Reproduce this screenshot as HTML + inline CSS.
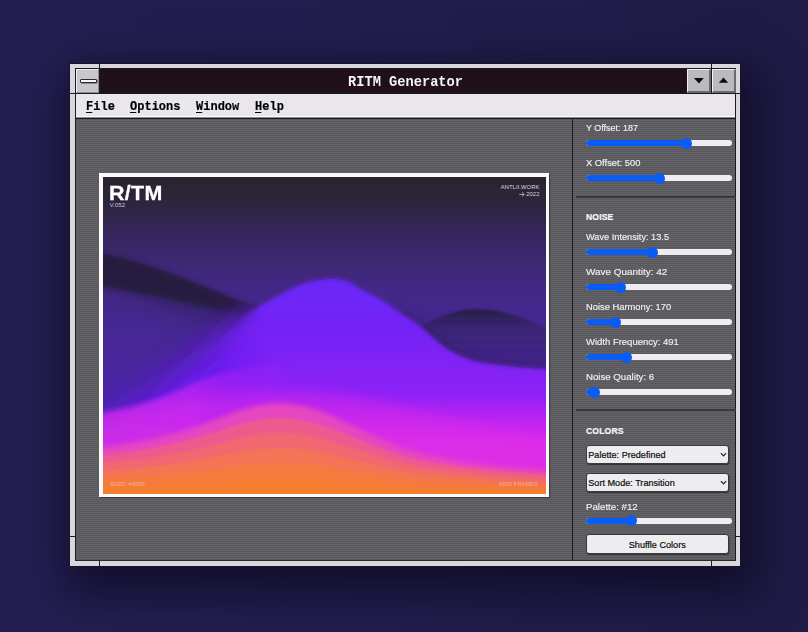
<!DOCTYPE html>
<html><head><meta charset="utf-8">
<style>
*{margin:0;padding:0;box-sizing:border-box}
html,body{width:808px;height:632px;overflow:hidden;background:#231e4e;font-family:"Liberation Sans",sans-serif}
.a{position:absolute}
#bg{left:0;top:0;width:808px;height:632px;background:linear-gradient(90deg,#241f52 0%,#221d4d 45%,#1f1b45 100%)}
.frame{background:#d9d7dc}
.dk{background:#1b1a20}
#content{left:76px;top:119px;width:659px;height:442px;background:#5e5d62;
 background-image:repeating-linear-gradient(180deg,rgba(0,0,0,0.05) 0 1px,rgba(255,255,255,0.03) 1px 2px)}
.lbl{color:#f2f0f4;font-size:9.8px;-webkit-text-stroke:0.15px #f2f0f4;white-space:nowrap;transform-origin:0 0;line-height:1}
.hdr{color:#f8f7fa;font-size:8.6px;font-weight:bold;-webkit-text-stroke:0.2px #f8f7fa;letter-spacing:0.15px;white-space:nowrap;line-height:1}
.track{height:6px;border-radius:3px;background:#efedf1;left:586px;width:146px}
.fill{height:6px;border-radius:3px;background:#0a5cf5;left:586px}
.thumb{width:11px;height:11px;border-radius:50%;background:#0a5cf5}
.sel{left:585.5px;width:143.5px;height:19.5px;background:#edecef;border:1px solid #3a393e;border-radius:3px;color:#0c0c0c;font-size:9.1px;line-height:19px;padding-left:1.8px;white-space:nowrap;-webkit-text-stroke:0.2px #0c0c0c;box-shadow:0.5px 1px 0.5px rgba(0,0,0,0.45)}
.chev{position:absolute;right:1.5px;top:6.5px;width:7px;height:5px}
.menu{font-family:"Liberation Mono",monospace;font-weight:bold;font-size:13.5px;color:#000;line-height:14px;white-space:nowrap;transform:scaleX(0.89);transform-origin:0 0;-webkit-text-stroke:0.2px #000}
.menu u{text-decoration:none;position:relative}
.menu u:after{content:"";position:absolute;left:0;width:7px;top:12.5px;height:1.6px;background:#000}
</style></head><body>
<div id="bg" class="a"></div>
<!-- window frame -->
<div class="a" style="left:69px;top:63px;width:672px;height:504px;background:#16142a;box-shadow:6px 16px 40px 10px rgba(6,4,18,0.55)"></div>
<div class="a frame" style="left:70px;top:64px;width:670px;height:502px"></div>
<!-- notches -->
<div class="a dk" style="left:99px;top:64px;width:1px;height:4px"></div>
<div class="a dk" style="left:711px;top:64px;width:1px;height:4px"></div>
<div class="a dk" style="left:70px;top:93px;width:5px;height:1px"></div>
<div class="a dk" style="left:736px;top:93px;width:4px;height:1px"></div>
<div class="a dk" style="left:99px;top:561px;width:1px;height:5px"></div>
<div class="a dk" style="left:711px;top:561px;width:1px;height:5px"></div>
<div class="a dk" style="left:70px;top:536px;width:5px;height:1px"></div>
<div class="a dk" style="left:736px;top:536px;width:4px;height:1px"></div>
<!-- inner dark border -->
<div class="a dk" style="left:75px;top:68px;width:661px;height:493px"></div>
<!-- close box -->
<div class="a" style="left:76px;top:69px;width:23px;height:24px;background:#c9c7cd;border-top:1px solid #eeedf0;border-left:1px solid #eeedf0;border-right:1px solid #8d8b92;border-bottom:1px solid #8d8b92"></div>
<div class="a" style="left:80px;top:79px;width:17px;height:4px;background:#f7f6f8;border:1px solid #2a2a2e;border-radius:1px;box-shadow:0.5px 0.5px 0 #555"></div>
<!-- title bar -->
<div class="a" style="left:100px;top:69px;width:587px;height:24px;background:#1f1117"></div>
<div class="a" style="left:340px;top:73px;width:131px;text-align:center;font-family:'Liberation Mono',monospace;font-weight:bold;font-size:13.7px;color:#f5f5f5;line-height:17px;transform:scaleY(1.11);transform-origin:50% 3px">RITM Generator</div>
<!-- buttons -->
<div class="a" style="left:687px;top:69px;width:24px;height:24px;background:#bdbabf;border-top:1.5px solid #f2f0f4;border-left:1.5px solid #f2f0f4;border-right:2px solid #6c6a70;border-bottom:2px solid #6c6a70"></div>
<div class="a" style="left:712px;top:69px;width:23.5px;height:24px;background:#bdbabf;border-top:1.5px solid #f2f0f4;border-left:1.5px solid #f2f0f4;border-right:2px solid #6c6a70;border-bottom:2px solid #6c6a70"></div>
<svg class="a" style="left:687px;top:69px" width="49" height="24"><g transform="translate(-687,-69)"><path d="M694 78 L703.8 78 L698.9 83.5 Z" fill="#0c0c0c"/><path d="M718.8 82.8 L728.2 82.8 L723.5 77.6 Z" fill="#0c0c0c"/></g></svg>
<!-- menu bar -->
<div class="a" style="left:76px;top:94px;width:659px;height:22px;background:#e9e7ec"></div>
<div class="a" style="left:76px;top:116px;width:659px;height:1px;background:#fbfafc"></div>
<div class="a" style="left:76px;top:117px;width:659px;height:1px;background:#8a898e"></div>
<div class="a menu" style="left:86px;top:100px"><u>F</u>ile</div>
<div class="a menu" style="left:129.5px;top:100px"><u>O</u>ptions</div>
<div class="a menu" style="left:195.5px;top:100px"><u>W</u>indow</div>
<div class="a menu" style="left:255px;top:100px"><u>H</u>elp</div>
<!-- content -->
<div id="content" class="a"></div>
<div class="a dk" style="left:572px;top:119px;width:1px;height:442px"></div>
<div class="a" style="left:76px;top:559.5px;width:659px;height:1.5px;background:#2a292e"></div>
<div class="a dk" style="left:576px;top:196px;width:160px;height:2px;background:#3a393e"></div>
<div class="a dk" style="left:576px;top:409px;width:160px;height:2px;background:#3a393e"></div>

<!-- panel controls -->
<div class="a lbl" style="left:585.5px;top:123px;transform:scaleX(0.915)">Y Offset: 187</div>
<div class="a track" style="top:140px"></div><div class="a fill" style="top:140px;width:100px"></div><div class="a thumb" style="left:681px;top:137.5px"></div>
<div class="a lbl" style="left:585.5px;top:158px;transform:scaleX(0.955)">X Offset: 500</div>
<div class="a track" style="top:175px"></div><div class="a fill" style="top:175px;width:74px"></div><div class="a thumb" style="left:654px;top:172.5px"></div>

<div class="a hdr" style="left:586px;top:213px">NOISE</div>
<div class="a lbl" style="left:585.5px;top:232px;transform:scaleX(0.939)">Wave Intensity: 13.5</div>
<div class="a track" style="top:249px"></div><div class="a fill" style="top:249px;width:67px"></div><div class="a thumb" style="left:647px;top:246.5px"></div>
<div class="a lbl" style="left:585.5px;top:267px;transform:scaleX(1.013)">Wave Quantity: 42</div>
<div class="a track" style="top:284px"></div><div class="a fill" style="top:284px;width:34px"></div><div class="a thumb" style="left:614.5px;top:281.5px"></div>
<div class="a lbl" style="left:585.5px;top:302px;transform:scaleX(0.954)">Noise Harmony: 170</div>
<div class="a track" style="top:319px"></div><div class="a fill" style="top:319px;width:30px"></div><div class="a thumb" style="left:610px;top:316.5px"></div>
<div class="a lbl" style="left:585.5px;top:337px;transform:scaleX(0.968)">Width Frequency: 491</div>
<div class="a track" style="top:354px"></div><div class="a fill" style="top:354px;width:40px"></div><div class="a thumb" style="left:620.5px;top:351.5px"></div>
<div class="a lbl" style="left:585.5px;top:372px;transform:scaleX(0.985)">Noise Quality: 6</div>
<div class="a track" style="top:389px"></div><div class="a fill" style="top:389px;width:10px"></div><div class="a thumb" style="left:588.5px;top:386.5px"></div>

<div class="a hdr" style="left:586px;top:427px">COLORS</div>
<div class="a sel" style="top:444.5px">Palette: Predefined<svg class="chev" viewBox="0 0 7 5"><path d="M0.9 1.2 L3.5 3.9 L6.1 1.2" fill="none" stroke="#222" stroke-width="1.2"/></svg></div>
<div class="a sel" style="top:472.5px;height:19.5px">Sort Mode: Transition<svg class="chev" viewBox="0 0 7 5"><path d="M0.9 1.2 L3.5 3.9 L6.1 1.2" fill="none" stroke="#222" stroke-width="1.2"/></svg></div>
<div class="a lbl" style="left:585.5px;top:501.5px;transform:scaleX(0.99)">Palette: #12</div>
<div class="a track" style="top:518px"></div><div class="a fill" style="top:518px;width:45px"></div><div class="a thumb" style="left:625.5px;top:515px"></div>
<div class="a sel" style="top:533.5px;height:20.5px;text-align:center;padding:0;line-height:20.5px;font-size:9.1px">Shuffle Colors</div>

<!-- poster -->
<div class="a" style="left:99px;top:173px;width:450px;height:324px;background:#fafafa;box-shadow:1px 1px 1px rgba(0,0,0,0.35)"></div>
<svg class="a" style="left:102.5px;top:176.5px" width="443.5" height="317" viewBox="102.5 176.5 443.5 317">
<defs>
<linearGradient id="gbg" x1="0" y1="176" x2="0" y2="420" gradientUnits="userSpaceOnUse">
<stop offset="0" stop-color="#29242f"/><stop offset="0.08" stop-color="#2c2538"/><stop offset="0.16" stop-color="#30264a"/><stop offset="0.225" stop-color="#35265c"/><stop offset="0.336" stop-color="#3c2870"/><stop offset="0.45" stop-color="#432886"/><stop offset="1" stop-color="#4c26ac"/></linearGradient>
<linearGradient id="gridge" x1="179" y1="280" x2="163" y2="328" gradientUnits="userSpaceOnUse">
<stop offset="0" stop-color="#201a30" stop-opacity="1"/><stop offset="0.3" stop-color="#261d42" stop-opacity="0.9"/><stop offset="1" stop-color="#3a2a80" stop-opacity="0"/></linearGradient>
<linearGradient id="ghump" x1="0" y1="309" x2="0" y2="370" gradientUnits="userSpaceOnUse">
<stop offset="0" stop-color="#241a3c" stop-opacity="1"/><stop offset="0.1" stop-color="#2a1e4c" stop-opacity="0.85"/><stop offset="0.3" stop-color="#30205c" stop-opacity="0.5"/><stop offset="1" stop-color="#36226a" stop-opacity="0.25"/></linearGradient>
<linearGradient id="ghill" x1="0" y1="278" x2="0" y2="440" gradientUnits="userSpaceOnUse">
<stop offset="0" stop-color="#6a26f8"/><stop offset="0.3" stop-color="#7424f7"/><stop offset="0.7" stop-color="#8c20f6"/><stop offset="0.85" stop-color="#b624f2"/><stop offset="1" stop-color="#d82aee"/></linearGradient>
<linearGradient id="gpink" x1="0" y1="403" x2="0" y2="494" gradientUnits="userSpaceOnUse">
<stop offset="0" stop-color="#ec48b8"/><stop offset="0.3" stop-color="#f05a88"/><stop offset="0.65" stop-color="#f26a58"/><stop offset="1" stop-color="#f77c22"/></linearGradient>
<linearGradient id="gmag" x1="0" y1="380" x2="0" y2="494" gradientUnits="userSpaceOnUse">
<stop offset="0" stop-color="#c824f0"/><stop offset="0.4" stop-color="#dc2ce8"/><stop offset="1" stop-color="#e83ad8"/></linearGradient>
<linearGradient id="gmR" x1="215" y1="0" x2="270" y2="0" gradientUnits="userSpaceOnUse"><stop offset="0" stop-color="#000"/><stop offset="1" stop-color="#fff"/></linearGradient>
<mask id="mR" maskUnits="userSpaceOnUse" x="90" y="160" width="470" height="350"><rect x="90" y="160" width="470" height="350" fill="url(#gmR)"/></mask>
<clipPath id="cR"><path d="M90 251 C150 268 210 292 256 308 C260.0 305.8 271.8 298.7 280.0 294.5 C288.2 290.3 296.7 285.7 305.0 283.0 C313.3 280.3 323.3 278.9 330.0 278.5 C336.7 278.1 340.0 278.8 345.0 280.5 C350.0 282.2 354.2 285.8 360.0 289.0 C365.8 292.2 373.5 295.6 380.0 299.5 C386.5 303.4 392.5 308.1 399.0 312.5 C405.5 316.9 413.0 321.4 419.0 326.0 C425.0 330.6 429.8 335.8 435.0 340.0 C440.2 344.2 443.5 347.5 450.0 351.0 C456.5 354.5 463.8 358.4 474.0 361.0 C484.2 363.6 498.3 365.1 511.0 366.5 C523.7 367.9 543.5 369.0 550.0 369.5 L560 369.5 L560 510 L90 510 Z"/></clipPath>
<filter id="b18" x="-50%" y="-50%" width="200%" height="200%"><feGaussianBlur stdDeviation="16"/></filter>
<filter id="b3" x="-20%" y="-50%" width="140%" height="200%"><feGaussianBlur stdDeviation="2.6"/></filter>
<linearGradient id="gmag2" x1="0" y1="375" x2="0" y2="445" gradientUnits="userSpaceOnUse"><stop offset="0" stop-color="#b824f2"/><stop offset="0.5" stop-color="#d02af0"/><stop offset="1" stop-color="#dc30e8"/></linearGradient>
<linearGradient id="gmL" x1="190" y1="0" x2="290" y2="0" gradientUnits="userSpaceOnUse"><stop offset="0" stop-color="#fff"/><stop offset="1" stop-color="#000"/></linearGradient>
<mask id="mL" maskUnits="userSpaceOnUse" x="90" y="160" width="470" height="350"><rect x="90" y="160" width="470" height="350" fill="url(#gmL)"/></mask>
<linearGradient id="gorg" x1="0" y1="465" x2="0" y2="494" gradientUnits="userSpaceOnUse"><stop offset="0" stop-color="#f47a3a" stop-opacity="0"/><stop offset="0.6" stop-color="#f47a34" stop-opacity="0.25"/><stop offset="1" stop-color="#f67c26" stop-opacity="0.65"/></linearGradient>
<filter id="b2" x="-20%" y="-20%" width="140%" height="140%"><feGaussianBlur stdDeviation="1.2"/></filter>
<filter id="b14" x="-50%" y="-50%" width="200%" height="200%"><feGaussianBlur stdDeviation="14"/></filter>
<filter id="b8" x="-50%" y="-50%" width="200%" height="200%"><feGaussianBlur stdDeviation="6"/></filter>
</defs>
<rect x="100" y="170" width="450" height="330" fill="url(#gbg)"/>
<path d="M95 251 C150 268 210 292 256 309 L256 420 L95 420 Z" fill="url(#gridge)" filter="url(#b2)" opacity="0.55"/>
<path d="M95 252 C140 258 200 283 256 308 L250 314 C200 306 140 292 95 285 Z" fill="#281d40" filter="url(#b3)"/>
<path d="M405 335 C430 320 450 309 476 309 C505 309 530 320 550 330 L550 400 L405 400 Z" fill="url(#ghump)" filter="url(#b2)"/>
<path d="M399 312.5 C402.3 314.8 413.0 321.4 419.0 326.0 C425.0 330.6 429.8 335.8 435.0 340.0 C440.2 344.2 443.5 347.5 450.0 351.0 C456.5 354.5 463.8 358.4 474.0 361.0 C484.2 363.6 498.3 365.1 511.0 366.5 C523.7 367.9 543.5 369.0 550.0 369.5" fill="none" stroke="#2a1c50" stroke-width="10" opacity="0.4" filter="url(#b8)"/>
<path d="M40 510 C120 460 200 365 256 308 C260.0 305.8 271.8 298.7 280.0 294.5 C288.2 290.3 296.7 285.7 305.0 283.0 C313.3 280.3 323.3 278.9 330.0 278.5 C336.7 278.1 340.0 278.8 345.0 280.5 C350.0 282.2 354.2 285.8 360.0 289.0 C365.8 292.2 373.5 295.6 380.0 299.5 C386.5 303.4 392.5 308.1 399.0 312.5 C405.5 316.9 413.0 321.4 419.0 326.0 C425.0 330.6 429.8 335.8 435.0 340.0 C440.2 344.2 443.5 347.5 450.0 351.0 C456.5 354.5 463.8 358.4 474.0 361.0 C484.2 363.6 498.3 365.1 511.0 366.5 C523.7 367.9 543.5 369.0 550.0 369.5 L550 500 L40 500 Z" fill="url(#ghill)" filter="url(#b18)" clip-path="url(#cR)"/>
<path d="M50 450 L240 335 L290 325 L290 440 L50 530 Z" fill="#6018f0" opacity="0.75" filter="url(#b18)" clip-path="url(#cR)"/>
<path d="M90 430 C150 400 215 340 256 308 C260.0 305.8 271.8 298.7 280.0 294.5 C288.2 290.3 296.7 285.7 305.0 283.0 C313.3 280.3 323.3 278.9 330.0 278.5 C336.7 278.1 340.0 278.8 345.0 280.5 C350.0 282.2 354.2 285.8 360.0 289.0 C365.8 292.2 373.5 295.6 380.0 299.5 C386.5 303.4 392.5 308.1 399.0 312.5 C405.5 316.9 413.0 321.4 419.0 326.0 C425.0 330.6 429.8 335.8 435.0 340.0 C440.2 344.2 443.5 347.5 450.0 351.0 C456.5 354.5 463.8 358.4 474.0 361.0 C484.2 363.6 498.3 365.1 511.0 366.5 C523.7 367.9 543.5 369.0 550.0 369.5 L550 500 L90 500 Z" fill="url(#ghill)" filter="url(#b3)" mask="url(#mR)"/>

<path d="M90 418 C130 412 160 404 200 396 C240 390 280 388 330 392 C400 405 480 425 550 440 L550 500 L90 500 Z" fill="url(#gmag)" filter="url(#b8)" opacity="0.5"/>
<path d="M95.0 414.0 C102.5 412.3 126.7 407.8 140.0 404.0 C153.3 400.2 165.0 395.0 175.0 391.0 C185.0 387.0 189.2 383.8 200.0 380.0 C210.8 376.2 223.3 370.7 240.0 368.0 C256.7 365.3 273.3 362.7 300.0 364.0 C326.7 365.3 358.3 370.7 400.0 376.0 C441.7 381.3 525.0 392.7 550.0 396.0 L550 500 L95 500 Z" fill="url(#gmag2)" filter="url(#b3)" opacity="0.75" mask="url(#mL)"/>
<path d="M95 448.0 C130 444.0 160 437.0 185 430.0 C220 419.0 245 404.0 275 403.0 C305 402.0 330 414.0 358 428.0 C385 441.0 400 448.0 425 454.0 C470 463.0 510 468.0 550 471.0 L550 500 L95 500 Z" fill="#e646c0" filter="url(#b3)"/>
<path d="M95 455.7 C130 452.3 160 446.4 185 440.6 C220 431.3 245 418.7 275 417.9 C305 417.0 330 427.1 358 438.9 C385 449.8 400 455.7 425 460.7 C470 468.3 510 472.5 550 475.0 L550 500 L95 500 Z" fill="#ef5a8e" filter="url(#b2)"/>
<path d="M95 463.4 C130 460.6 160 455.9 185 451.1 C220 443.6 245 433.4 275 432.8 C305 432.1 330 440.2 358 449.8 C385 458.6 400 463.4 425 467.4 C470 473.6 510 477.0 550 479.0 L550 500 L95 500 Z" fill="#f16870" filter="url(#b2)"/>
<path d="M95 471.0 C130 469.0 160 465.3 185 461.7 C220 456.0 245 448.2 275 447.6 C305 447.1 330 453.4 358 460.6 C385 467.4 400 471.0 425 474.2 C470 478.8 510 481.4 550 483.0 L550 500 L95 500 Z" fill="#f37456" filter="url(#b2)"/>
<path d="M95 478.7 C130 477.3 160 474.8 185 472.2 C220 468.3 245 462.9 275 462.5 C305 462.2 330 466.5 358 471.5 C385 476.2 400 478.7 425 480.9 C470 484.1 510 485.9 550 487.0 L550 500 L95 500 Z" fill="#f47a40" filter="url(#b2)"/>
<path d="M95 486.4 C130 485.6 160 484.2 185 482.8 C220 480.6 245 477.6 275 477.4 C305 477.2 330 479.6 358 482.4 C385 485.0 400 486.4 425 487.6 C470 489.4 510 490.4 550 491.0 L550 500 L95 500 Z" fill="#f68030" filter="url(#b2)"/>
<rect x="100" y="440" width="450" height="60" fill="url(#gorg)"/>




</svg>
<div class="a" style="left:108.5px;top:183px;font-size:20px;font-weight:bold;color:#fff;line-height:1;letter-spacing:0.3px;transform:scaleX(1.07);transform-origin:0 0;-webkit-text-stroke:0.3px #fff">R/TM</div>
<div class="a" style="left:109.5px;top:202.3px;font-size:6.2px;color:#c8c4d4;line-height:1">V.052</div>
<div class="a" style="left:480px;top:184px;width:59.5px;text-align:right;font-size:5.8px;color:#d8d4e0;line-height:6.6px;letter-spacing:0.1px">ANTLII.WORK<br>2022</div>
<svg class="a" style="left:519px;top:191.5px" width="6" height="5" viewBox="0 0 6 5"><path d="M0.3 2.5 H5.2 M3 0.4 L5.3 2.5 L3 4.6" fill="none" stroke="#d8d4e0" stroke-width="0.7"/></svg>
<div class="a" style="left:109.5px;top:481.5px;font-size:5.8px;color:#f8c8b0;line-height:1;opacity:0.7">SEED: #9995</div>
<div class="a" style="left:480px;top:481.5px;width:58px;text-align:right;font-size:5.8px;color:#f8c8b0;line-height:1;opacity:0.7">6600 FRAMES</div>
</body></html>
